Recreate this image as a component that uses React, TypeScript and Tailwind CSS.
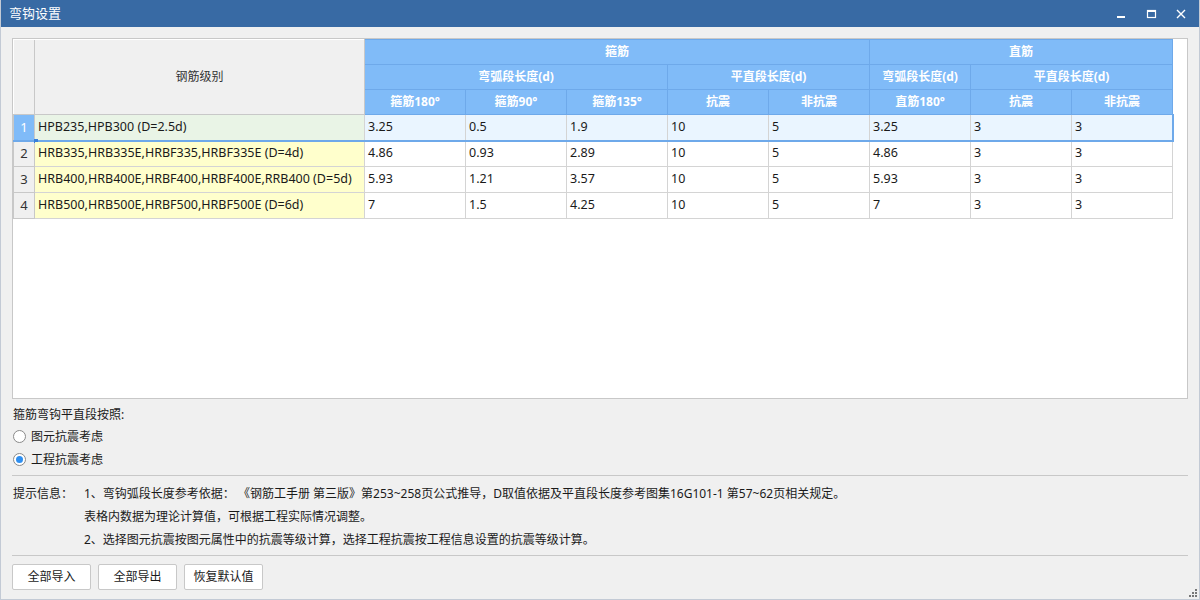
import React from "react";

const font = { fontFamily: '"Noto Sans", "Noto Sans CJK SC", sans-serif' };

const rows = [
  { name: "HPB235,HPB300 (D=2.5d)", v: ["3.25", "0.5", "1.9", "10", "5", "3.25", "3", "3"] },
  { name: "HRB335,HRB335E,HRBF335,HRBF335E (D=4d)", v: ["4.86", "0.93", "2.89", "10", "5", "4.86", "3", "3"] },
  { name: "HRB400,HRB400E,HRBF400,HRBF400E,RRB400 (D=5d)", v: ["5.93", "1.21", "3.57", "10", "5", "5.93", "3", "3"] },
  { name: "HRB500,HRB500E,HRBF500,HRBF500E (D=6d)", v: ["7", "1.5", "4.25", "10", "5", "7", "3", "3"] },
];

const hd = "bg-[#80bbf8] border border-[#6ea9ea] text-white font-bold text-center h-[25px] p-0";

function Radio({ checked, label }: { checked?: boolean; label: string }) {
  return (
    <div className="flex items-center gap-[5px] h-[23px]">
      <span className="w-[13px] h-[13px] rounded-full border border-[#8a8a8a] bg-white flex items-center justify-center">
        {checked && <span className="w-[7px] h-[7px] rounded-full bg-[#2f8ff0]" />}
      </span>
      <span>{label}</span>
    </div>
  );
}

export default function App() {
  return (
    <div style={font} className="w-[1200px] h-[600px] bg-[#f0f0f0] text-[12px] text-[#1a1a1a] flex flex-col border-l border-r border-b border-[#c3cad5] relative overflow-hidden">
      <div className="h-[27px] bg-[#386aa4] flex items-center justify-between pl-[8px] pr-[10px] text-white text-[13px] shrink-0">
        <span>弯钩设置</span>
        <div className="flex items-center gap-[14px]">
          <svg width="16" height="16" viewBox="0 0 16 16"><rect x="4" y="10" width="8" height="2" fill="white" /></svg>
          <svg width="16" height="16" viewBox="0 0 16 16"><rect x="4.5" y="4.5" width="8" height="7" fill="none" stroke="white" strokeWidth="1.2" /><rect x="4.5" y="4" width="8" height="2" fill="white" /></svg>
          <svg width="16" height="16" viewBox="0 0 16 16"><path d="M4 4 L12 12 M12 4 L4 12" stroke="white" strokeWidth="1.4" /></svg>
        </div>
      </div>

      <div className="flex-1 flex flex-col px-[11px] pt-[11px]">
        <div className="h-[361px] bg-white border border-[#c8c8c8] shrink-0 overflow-hidden">
          <table className="table-fixed border-collapse w-[1159px]">
            <colgroup>
              <col className="w-[21px]" />
              <col className="w-[330px]" />
              {Array.from({ length: 8 }).map((_, i) => <col key={i} className="w-[101px]" />)}
            </colgroup>
            <thead>
              <tr>
                <th rowSpan={3} className="bg-[#f0f0f0] border-r border-[#c8c8c8]" />
                <th rowSpan={3} className="bg-[#f0f0f0] border-r border-b border-[#c8c8c8] font-normal text-[#333]">钢筋级别</th>
                <th colSpan={5} className={hd}>箍筋</th>
                <th colSpan={3} className={hd}>直筋</th>
              </tr>
              <tr>
                <th colSpan={3} className={hd}>弯弧段长度(d)</th>
                <th colSpan={2} className={hd}>平直段长度(d)</th>
                <th className={hd}>弯弧段长度(d)</th>
                <th colSpan={2} className={hd}>平直段长度(d)</th>
              </tr>
              <tr>
                {["箍筋180°", "箍筋90°", "箍筋135°", "抗震", "非抗震", "直筋180°", "抗震", "非抗震"].map((t, i) => (
                  <th key={i} className={hd}>{t}</th>
                ))}
              </tr>
            </thead>
            <tbody>
              {rows.map((r, i) => {
                const sel = i === 0;
                return (
                  <tr key={i} className={sel ? "border-b-2 border-[#6ea9ea]" : ""}>
                    <td className={`h-[26px] p-0 text-center border border-[#c8c8c8] text-[13px] ${sel ? "bg-[#80bbf8] text-white border-[#6ea9ea]" : "bg-[#f0f0f0] text-[#333]"}`}>{i + 1}</td>
                    <td className={`h-[26px] px-[3px] border border-[#d4d4d4] whitespace-nowrap text-[12.5px] relative ${sel ? "bg-[#e9f4e6]" : "bg-[#ffffcc]"}`}>
                      {r.name}
                      {sel && <span className="absolute left-[-1px] bottom-[-3px] w-[4px] h-[4px] bg-[#3a7fd8]" />}
                    </td>
                    {r.v.map((v, j) => (
                      <td key={j} className={`h-[26px] px-[3px] border border-[#d4d4d4] text-[12.5px] ${sel ? "bg-[#eaf5ff]" : "bg-white"} ${sel && j === 7 ? "border-r-2 border-r-[#6ea9ea]" : ""}`}>{v}</td>
                    ))}
                  </tr>
                );
              })}
            </tbody>
          </table>
        </div>

        <div className="pt-[6px] pl-[1px]">
          <div className="h-[20px] flex items-center">箍筋弯钩平直段按照:</div>
          <Radio label="图元抗震考虑" />
          <Radio checked label="工程抗震考虑" />
        </div>

        <div className="border-t border-[#c8c8c8] mt-[4px] pt-[6px] pl-[1px]">
          <div className="flex">
            <div className="w-[71px] shrink-0 h-[23px] flex items-center">提示信息：</div>
            <div className="flex flex-col">
              <div className="h-[23px] flex items-center">1、弯钩弧段长度参考依据：&nbsp;《钢筋工手册 第三版》第253~258页公式推导，D取值依据及平直段长度参考图集16G101-1 第57~62页相关规定。</div>
              <div className="h-[23px] flex items-center">表格内数据为理论计算值，可根据工程实际情况调整。</div>
              <div className="h-[23px] flex items-center">2、选择图元抗震按图元属性中的抗震等级计算，选择工程抗震按工程信息设置的抗震等级计算。</div>
            </div>
          </div>
        </div>

        <div className="border-t border-[#c8c8c8] mt-[4px] pt-[8px] flex gap-[7px]">
          {["全部导入", "全部导出", "恢复默认值"].map((t) => (
            <button key={t} className="w-[79px] h-[26px] bg-white border border-[#c8c8c8] rounded-[2px] text-[12px] text-[#1a1a1a]">{t}</button>
          ))}
        </div>
      </div>

      <svg className="absolute right-[1px] bottom-[1px]" width="10" height="10" viewBox="0 0 10 10">
        <rect x="7" y="1" width="2" height="2" fill="#777" />
        <rect x="4" y="4" width="2" height="2" fill="#777" />
        <rect x="7" y="4" width="2" height="2" fill="#777" />
        <rect x="1" y="7" width="2" height="2" fill="#777" />
        <rect x="4" y="7" width="2" height="2" fill="#777" />
        <rect x="7" y="7" width="2" height="2" fill="#777" />
      </svg>
    </div>
  );
}
